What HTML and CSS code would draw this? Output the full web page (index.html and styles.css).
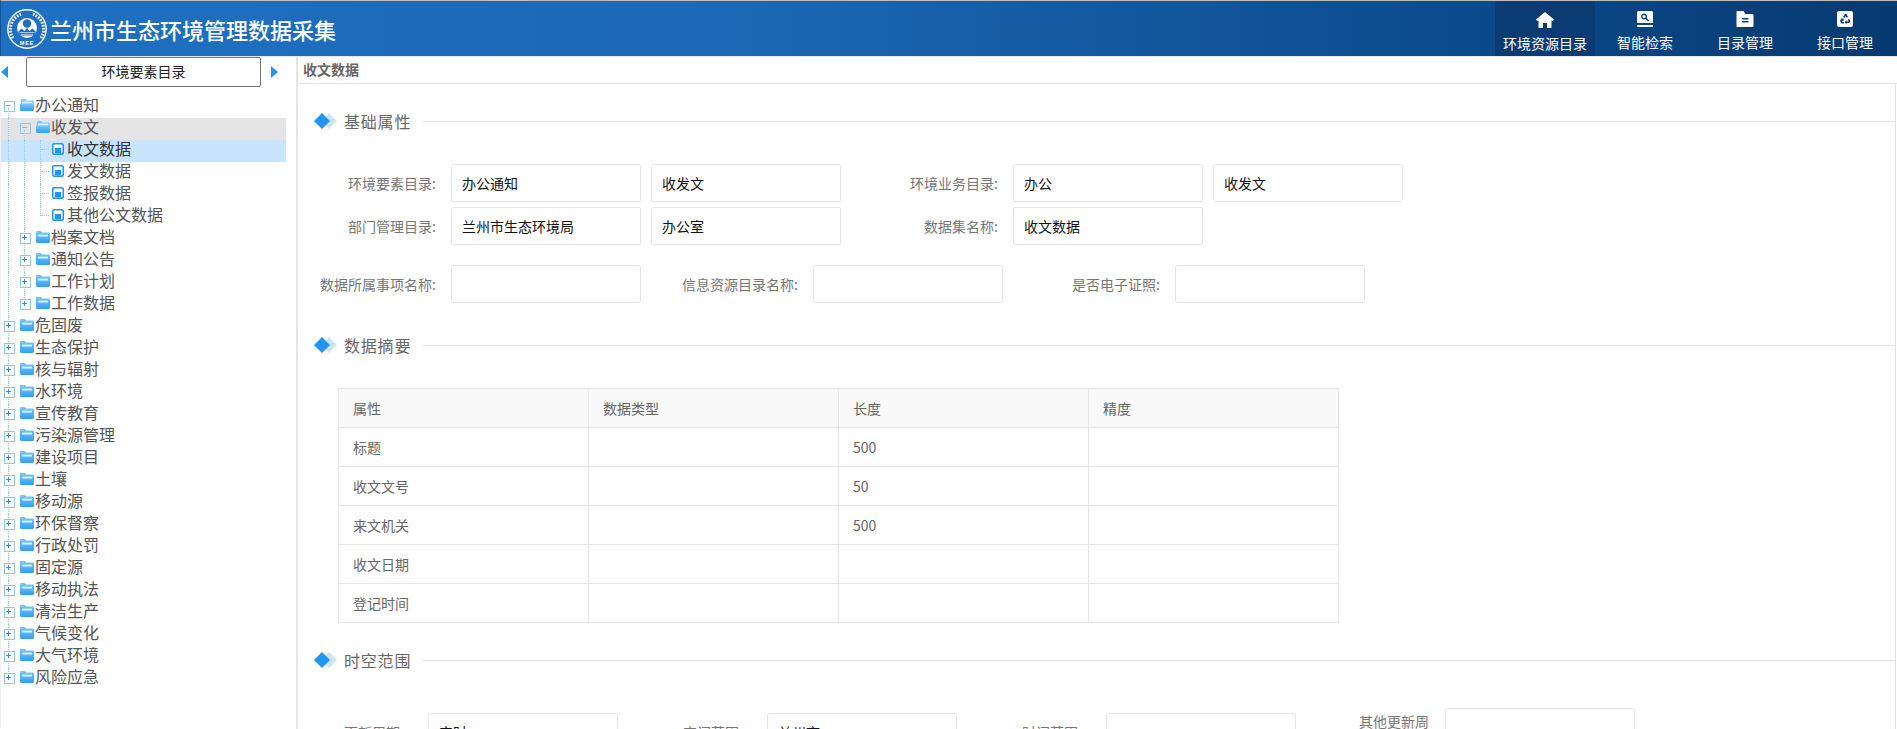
FILE: index.html
```html
<!DOCTYPE html>
<html lang="zh-CN">
<head>
<meta charset="utf-8">
<title>兰州市生态环境管理数据采集</title>
<link rel="stylesheet" href="styles.css">
</head>
<body>
<svg class="defs" width="0" height="0" aria-hidden="true">
  <defs>
    <linearGradient id="fg" x1="0" y1="0" x2="0" y2="1"><stop offset="0" stop-color="#7cc8fb"/><stop offset="1" stop-color="#2f9ff5"/></linearGradient>
    <symbol id="folder" viewBox="0 0 14 12">
      <path d="M0 1.2C0 .5.5 0 1.2 0h3.6l1.400 1.600h6.600c.7 0 1.200.5 1.200 1.200v8c0 .7-.5 1.200-1.200 1.200H1.200C.5 12 0 11.500 0 10.800z" fill="url(#fg)"/>
      <rect x="2" y="3.600" width="10" height="2" fill="#d6eefd"/>
    </symbol>
    <symbol id="open" viewBox="0 0 14 12">
      <path d="M1 1.200C1 .5 1.500 0 2.200 0h3l1.400 1.600h6c.7 0 1.200.5 1.200 1.200v1.400H1z" fill="#7cc8fb"/>
      <path d="M0 5.200c0-.6.400-1 1-1h12c.6 0 1 .4 1 1v5.600c0 .7-.5 1.200-1.200 1.200H1.200C.5 12 0 11.500 0 10.800z" fill="url(#fg)"/>
      <rect x="2" y="2.600" width="10" height="1.600" fill="#e3f3fe"/>
    </symbol>
    <symbol id="doc" viewBox="0 0 12 12">
      <rect x="0" y="0" width="12" height="12" rx="2" fill="#2196f0"/>
      <rect x="1.500" y="1.500" width="9" height="9" rx="1" fill="#fff"/>
      <rect x="2.800" y="5" width="6.400" height="5.500" fill="#2196f0"/>
    </symbol>
    <symbol id="dia" viewBox="0 0 23 16">
      <path d="M15 0l8 8-8 8-8-8z" fill="#cbe6fd"/>
      <path d="M8 0l8 8-8 8-8-8z" fill="#2196f0"/>
    </symbol>
  </defs>
</svg>

<header class="topbar">
  <div class="brand">
    <svg class="logo" viewBox="0 0 40 40" role="img" aria-label="MEE">
      <circle cx="20" cy="20" r="19.200" fill="none" stroke="#fff" stroke-width="1.400"/>
      <path d="M6 29A16 16 0 0 1 14 5.200M34 29A16 16 0 0 0 26 5.200" fill="none" stroke="#fff" stroke-width="3" stroke-dasharray="1.600 1.400"/>
      <circle cx="20" cy="19" r="10" fill="#fff"/>
      <circle cx="20" cy="14.500" r="4.200" fill="#1f6fc1"/>
      <path d="M11 23l3.500-3.500 3 2.500 2.500-3 2.500 3 3-2.500L29 23l-2 3.500H13z" fill="#1f6fc1"/>
      <path d="M12.500 23.500h15M14 25.300h12" stroke="#fff" stroke-width=".6"/>
      <text class="logo-text" x="20" y="35.500">MEE</text>
    </svg>
    <h1 class="title">兰州市生态环境管理数据采集</h1>
  </div>
  <nav class="nav">
    <a class="nav-item active">
      <svg class="nav-icon" viewBox="0 0 18 16"><path d="M9 0l9 7.500-1 1.300H15.500V16H11v-5H7v5H2.500V8.800H1L0 7.500z" fill="#fff"/></svg>
      <span>环境资源目录</span>
    </a>
    <a class="nav-item">
      <svg class="nav-icon" viewBox="0 0 16 16"><path fill-rule="evenodd" d="M1.500 0h13c.8 0 1.500.7 1.500 1.500V12H0V1.500C0 .7.700 0 1.500 0zM7 2.500a3 3 0 1 0 1.500 5.600L11 10.600l1.200-1.200-2.500-2.400A3 3 0 0 0 7 2.500zm0 1.400a1.600 1.600 0 1 1 0 3.200 1.600 1.600 0 0 1 0-3.200z" fill="#fff"/><rect y="14" width="16" height="2" fill="#fff"/></svg>
      <span>智能检索</span>
    </a>
    <a class="nav-item">
      <svg class="nav-icon" viewBox="0 0 17 16"><path fill-rule="evenodd" d="M0 1c0-.6.400-1 1-1h6l2 3h7c.6 0 1 .4 1 1v11c0 .6-.4 1-1 1H1c-.6 0-1-.4-1-1zM5.500 7v1.500h6.500V7zm0 3v1.500h6.500V10z" fill="#fff"/></svg>
      <span>目录管理</span>
    </a>
    <a class="nav-item">
      <svg class="nav-icon" viewBox="0 0 16 16"><path fill-rule="evenodd" d="M2 0h12c1.100 0 2 .9 2 2v12c0 1.100-.9 2-2 2H2c-1.100 0-2-.9-2-2V2C0 .9.900 0 2 0zm6 3L6 6l1.500 1 1.200-2 1 1.700 1.300-.8L9.500 3zM4 8l-1 2 1.500 2.500H7V11H5l1-1.800L7 9.800 6.600 7.500 4 7.800zm8 0l-1.300.8 1 1.700H9.500V9L7.800 11.200l1.700 2.300v-1.500h2.800l1.200-2z" fill="#fff"/></svg>
      <span>接口管理</span>
    </a>
  </nav>
</header>

<div class="body">
  <aside class="side">
    <div class="side-head">
      <i class="arrow left"></i>
      <button class="side-btn">环境要素目录</button>
      <i class="arrow right"></i>
    </div>
    <ul class="tree">
      <li class="node"><i class="sw minus first"></i><svg class="ico"><use href="#open"/></svg><span class="txt">办公通知</span></li>
      <li class="node open-row"><i class="sw vline"></i><i class="sw minus first"></i><svg class="ico"><use href="#open"/></svg><span class="txt">收发文</span></li>
      <li class="node sel"><i class="sw vline"></i><i class="sw vline"></i><i class="sw elbow"></i><svg class="ico doc"><use href="#doc"/></svg><span class="txt">收文数据</span></li>
      <li class="node"><i class="sw vline"></i><i class="sw vline"></i><i class="sw elbow"></i><svg class="ico doc"><use href="#doc"/></svg><span class="txt">发文数据</span></li>
      <li class="node"><i class="sw vline"></i><i class="sw vline"></i><i class="sw elbow"></i><svg class="ico doc"><use href="#doc"/></svg><span class="txt">签报数据</span></li>
      <li class="node"><i class="sw vline"></i><i class="sw vline"></i><i class="sw elbow last"></i><svg class="ico doc"><use href="#doc"/></svg><span class="txt">其他公文数据</span></li>
      <li class="node"><i class="sw vline"></i><i class="sw plus"></i><svg class="ico"><use href="#folder"/></svg><span class="txt">档案文档</span></li>
      <li class="node"><i class="sw vline"></i><i class="sw plus"></i><svg class="ico"><use href="#folder"/></svg><span class="txt">通知公告</span></li>
      <li class="node"><i class="sw vline"></i><i class="sw plus"></i><svg class="ico"><use href="#folder"/></svg><span class="txt">工作计划</span></li>
      <li class="node"><i class="sw vline"></i><i class="sw plus last"></i><svg class="ico"><use href="#folder"/></svg><span class="txt">工作数据</span></li>
      <li class="node"><i class="sw plus"></i><svg class="ico"><use href="#folder"/></svg><span class="txt">危固废</span></li>
      <li class="node"><i class="sw plus"></i><svg class="ico"><use href="#folder"/></svg><span class="txt">生态保护</span></li>
      <li class="node"><i class="sw plus"></i><svg class="ico"><use href="#folder"/></svg><span class="txt">核与辐射</span></li>
      <li class="node"><i class="sw plus"></i><svg class="ico"><use href="#folder"/></svg><span class="txt">水环境</span></li>
      <li class="node"><i class="sw plus"></i><svg class="ico"><use href="#folder"/></svg><span class="txt">宣传教育</span></li>
      <li class="node"><i class="sw plus"></i><svg class="ico"><use href="#folder"/></svg><span class="txt">污染源管理</span></li>
      <li class="node"><i class="sw plus"></i><svg class="ico"><use href="#folder"/></svg><span class="txt">建设项目</span></li>
      <li class="node"><i class="sw plus"></i><svg class="ico"><use href="#folder"/></svg><span class="txt">土壤</span></li>
      <li class="node"><i class="sw plus"></i><svg class="ico"><use href="#folder"/></svg><span class="txt">移动源</span></li>
      <li class="node"><i class="sw plus"></i><svg class="ico"><use href="#folder"/></svg><span class="txt">环保督察</span></li>
      <li class="node"><i class="sw plus"></i><svg class="ico"><use href="#folder"/></svg><span class="txt">行政处罚</span></li>
      <li class="node"><i class="sw plus"></i><svg class="ico"><use href="#folder"/></svg><span class="txt">固定源</span></li>
      <li class="node"><i class="sw plus"></i><svg class="ico"><use href="#folder"/></svg><span class="txt">移动执法</span></li>
      <li class="node"><i class="sw plus"></i><svg class="ico"><use href="#folder"/></svg><span class="txt">清洁生产</span></li>
      <li class="node"><i class="sw plus"></i><svg class="ico"><use href="#folder"/></svg><span class="txt">气候变化</span></li>
      <li class="node"><i class="sw plus"></i><svg class="ico"><use href="#folder"/></svg><span class="txt">大气环境</span></li>
      <li class="node"><i class="sw plus last"></i><svg class="ico"><use href="#folder"/></svg><span class="txt">风险应急</span></li>
    </ul>
  </aside>

  <main class="main">
    <div class="crumb">收文数据</div>
    <div class="content">
      <div class="sec-title"><svg class="dia"><use href="#dia"/></svg><span class="sec-name">基础属性</span><span class="sec-line"></span></div>
      <div class="row row-1">
        <div class="field"><label class="lab lab-a">环境要素目录:</label><div class="inp">办公通知</div></div>
        <div class="inp">收发文</div>
        <div class="field"><label class="lab lab-b">环境业务目录:</label><div class="inp">办公</div></div>
        <div class="inp">收发文</div>
      </div>
      <div class="row row-2">
        <div class="field"><label class="lab lab-a">部门管理目录:</label><div class="inp">兰州市生态环境局</div></div>
        <div class="inp">办公室</div>
        <div class="field"><label class="lab lab-b">数据集名称:</label><div class="inp">收文数据</div></div>
      </div>
      <div class="row row-3">
        <div class="field"><label class="lab lab-a">数据所属事项名称:</label><div class="inp"></div></div>
        <div class="field"><label class="lab lab-b">信息资源目录名称:</label><div class="inp"></div></div>
        <div class="field"><label class="lab lab-b">是否电子证照:</label><div class="inp"></div></div>
      </div>

      <div class="sec-title sec-2"><svg class="dia"><use href="#dia"/></svg><span class="sec-name">数据摘要</span><span class="sec-line"></span></div>
      <table class="tbl">
        <thead><tr><th>属性</th><th>数据类型</th><th>长度</th><th>精度</th></tr></thead>
        <tbody>
          <tr><td>标题</td><td></td><td>500</td><td></td></tr>
          <tr><td>收文文号</td><td></td><td>50</td><td></td></tr>
          <tr><td>来文机关</td><td></td><td>500</td><td></td></tr>
          <tr><td>收文日期</td><td></td><td></td><td></td></tr>
          <tr><td>登记时间</td><td></td><td></td><td></td></tr>
        </tbody>
      </table>

      <div class="sec-title sec-3"><svg class="dia"><use href="#dia"/></svg><span class="sec-name">时空范围</span><span class="sec-line"></span></div>
      <div class="row row-4">
        <div class="field low"><label class="lab lab-c">更新周期:</label><div class="inp">实时</div></div>
        <div class="field low"><label class="lab lab-c">空间范围:</label><div class="inp">兰州市</div></div>
        <div class="field low"><label class="lab lab-c">时间范围:</label><div class="inp"></div></div>
        <div class="field top"><label class="lab lab-d">其他更新周期:</label><div class="inp"></div></div>
      </div>
    </div>
  </main>
</div>
</body>
</html>
```

FILE: styles.css
```css
* { box-sizing: border-box; }
html, body { margin: 0; height: 729px; overflow: hidden; background: #fff; }
body { font-family: "Noto Sans CJK SC", "Liberation Sans", sans-serif; font-size: 14px; color: #666; display: flex; flex-direction: column; }
.defs { position: absolute; }

.topbar { height: 56px; flex: none; display: flex; justify-content: space-between; border-top: 1px solid #bdbdbd; border-left: 1px solid #14508f; background: linear-gradient(90deg, #1f70c3 0%, #1c67b4 40%, #0b4a8b 78%, #073a70 100%); padding-right: 2px; }
.brand { display: flex; align-items: center; }
.logo { width: 40px; height: 40px; margin-left: 6px; flex: none; }
.logo-text { font-family: "Liberation Sans", sans-serif; font-size: 5.500px; font-weight: 700; fill: #fff; text-anchor: middle; letter-spacing: .8px; }
.title { margin: 0 0 0 3px; font-size: 22px; font-weight: 500; color: #fff; line-height: 30px; }
.nav { display: flex; }
.nav-item { width: 100px; display: flex; flex-direction: column; align-items: center; color: #fff; padding-top: 10px; font-size: 14px; line-height: 20px; }
.nav-item.active { background: #0a3b73; padding-top: 11px; }
.nav-icon { width: 18px; height: 16px; margin-bottom: 5px; display: block; }

.body { flex: 1; display: flex; min-height: 0; border-top: 1px solid #e6e6e6; }
.side { width: 298px; flex: none; border-right: 2px solid #e6e6e6; }
.side-head { height: 30px; display: flex; align-items: center; padding-left: 1px; }
.arrow { width: 0; height: 0; border-style: solid; border-width: 6px 0; border-color: transparent; display: block; }
.arrow.left { border-right: 7px solid #2196f0; margin-right: 18px; }
.arrow.right { border-left: 7px solid #2196f0; margin-left: 10px; }
.side-btn { width: 235px; height: 30px; border: 1px solid #777; border-radius: 2px; background: #fff; font: 14px/26px "Noto Sans CJK SC", sans-serif; color: #222; padding: 0 0 2px; }

.tree { list-style: none; margin: 9px 0 0; padding: 0; border-left: 1px solid #f0f0f0; min-height: 632px; }
.node { height: 22px; width: 285px; display: flex; align-items: flex-start; color: #555; font-size: 16px; line-height: 20px; }
.open-row { background: #e4e4e4; }
.sel { background: #c9e4ff; color: #333; }
.txt { margin-left: 1px; white-space: nowrap; margin-top: -2px; }
.ico { width: 14px; height: 12px; margin: 3px 0 0 3px; flex: none; }
.ico.doc { width: 12px; margin-left: 3px; margin-right: 2px; }

.sw { width: 16px; height: 22px; position: relative; flex: none; display: block; }
.vline::before { content: ""; position: absolute; left: 7px; top: 0; bottom: 0; border-left: 1px dotted #9ccbf0; }
.elbow::before { content: ""; position: absolute; left: 7px; top: 0; bottom: 0; border-left: 1px dotted #9ccbf0; }
.elbow.last::before { bottom: 12px; }
.elbow::after { content: ""; position: absolute; left: 8px; width: 8px; top: 9px; border-top: 1px dotted #9ccbf0; }
.plus::before, .minus::before { content: ""; position: absolute; left: 3px; top: 5px; width: 9px; height: 9px; background-color: #fff; border: 1px solid #93c7f0; background-image: linear-gradient(#2f8fe0, #2f8fe0), linear-gradient(#2f8fe0, #2f8fe0); background-repeat: no-repeat; background-position: 1px 3px, 3px 1px; background-size: 5px 1px, 1px 5px; z-index: 1; }
.minus::before { background-color: transparent; background-image: linear-gradient(#7fb4e0, #7fb4e0); background-size: 5px 1px; background-position: 1px 3px; }
.plus::after, .minus::after { content: ""; position: absolute; left: 7px; top: 0; bottom: 0; width: 9px; border-left: 1px dotted #9ccbf0; }
.minus.first::after { top: 12px; }
.plus.last::after { bottom: 12px; }

.main { flex: 1; min-width: 0; display: flex; flex-direction: column; }
.crumb { height: 27px; flex: none; border-bottom: 1px solid #e6e6e6; padding-left: 5px; font-size: 14px; font-weight: 700; line-height: 24px; color: #666; }
.content { flex: 1; border-right: 1px solid #e0e0e0; padding-left: 6px; overflow: hidden; margin-right: 1px; }

.sec-title { display: flex; align-items: center; height: 20px; margin: 27px 0 0 10px; }
.dia { width: 23px; height: 16px; flex: none; }
.sec-name { font-size: 16px; letter-spacing: .8px; color: #666; margin-left: 7px; line-height: 20px; white-space: nowrap; }
.sec-line { flex: 1; border-top: 1px solid #e6e6e6; margin-left: 11px; margin-right: -1px; }
.sec-2 { margin-top: 32px; }
.sec-3 { margin-top: 27px; }

.row { display: flex; }
.row-1 { margin-top: 33px; }
.row-2 { margin-top: 5px; }
.row-3 { margin-top: 20px; gap: 10px; }
.row-4 { margin-top: 33px; align-items: flex-start; }
.row > .inp { margin-left: 10px; }
.field { display: flex; align-items: center; }
.row-1 .inp + .field, .row-2 .inp + .field { margin-left: 10px; }
.inp { width: 190px; height: 38px; flex: none; border: 1px solid #e6e6e6; border-radius: 2px; padding: 0 10px; line-height: 36px; color: #111; font-size: 14px; white-space: nowrap; }
.lab { text-align: right; flex: none; color: #777; font-size: 14px; line-height: 20px; }
.lab-a { width: 132px; margin-right: 15px; }
.lab-b { width: 147px; margin-right: 15px; }
.lab-c { width: 100px; margin-right: 24px; }
.lab-d { width: 71px; margin-right: 15px; align-self: flex-start; padding-top: 8px; text-align: left; }
.low { margin-top: 10px; margin-right: 25px; }
.top { margin-left: 38px; }

.tbl { border-collapse: collapse; width: 1001px; margin: 33px 0 0 34px; table-layout: fixed; }
.tbl th, .tbl td { height: 39px; border: 1px solid #e6e6e6; padding: 0 14px 1px; text-align: left; font-size: 14px; font-weight: 400; color: #666; }
.tbl th { background: #f9f9f9; }
```
